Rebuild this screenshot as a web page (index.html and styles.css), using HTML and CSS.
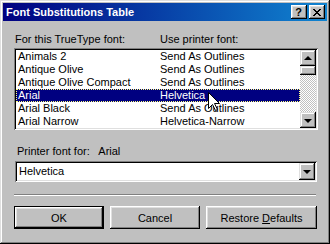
FILE: index.html
```html
<!DOCTYPE html>
<html lang="en">
<head>
    <meta charset="UTF-8">
    <title>Font Substitutions Table</title>
    <link rel="stylesheet" href="styles.css">
</head>
<body>
    <div class="window">
        <div class="titlebar">
            <span class="title">Font Substitutions Table</span>
            <div class="title-buttons">
                <div class="tb tb-help">?</div>
                <div class="tb tb-close">
                    <svg width="8" height="7" viewBox="0 0 8 7"><path d="M0 0h2v1h1v1h2v-1h1v-1h2v1h-1v1h-1v1h-1v1h1v1h1v1h1v1h-2v-1h-1v-1h-2v1h-1v1h-2v-1h1v-1h1v-1h1v-1h-1v-1h-1v-1h-1z" fill="#000"/></svg>
                </div>
            </div>
        </div>

        <div class="content">
            <div class="list-head">
                <span class="col1">For this TrueType font:</span>
                <span class="col2">Use printer font:</span>
            </div>

            <div class="listbox">
                <div class="rows">
                    <div class="row"><span class="col1">Animals 2</span><span class="col2">Send As Outlines</span></div>
                    <div class="row"><span class="col1">Antique Olive</span><span class="col2">Send As Outlines</span></div>
                    <div class="row"><span class="col1">Antique Olive Compact</span><span class="col2">Send As Outlines</span></div>
                    <div class="row selected"><span class="col1">Arial</span><span class="col2">Helvetica</span></div>
                    <div class="row"><span class="col1">Arial Black</span><span class="col2">Send As Outlines</span></div>
                    <div class="row"><span class="col1">Arial Narrow</span><span class="col2">Helvetica-Narrow</span></div>
                </div>
                <div class="scrollbar">
                    <div class="sb-btn"><span class="arrow-up"></span></div>
                    <div class="sb-thumb"></div>
                    <div class="sb-track"></div>
                    <div class="sb-btn"><span class="arrow-down"></span></div>
                </div>
            </div>

            <div class="printer-label">Printer font for:&nbsp;&nbsp; Arial</div>

            <div class="combo">
                <span class="combo-text">Helvetica</span>
                <div class="sb-btn combo-btn"><span class="arrow-down"></span></div>
            </div>

            <div class="separator"></div>

            <div class="buttons">
                <div class="btn btn-default"><span>OK</span></div>
                <div class="btn"><span>Cancel</span></div>
                <div class="btn btn-wide"><span>Restore <u>D</u>efaults</span></div>
            </div>
        </div>

        <!-- mouse pointer over the list -->
        <svg class="cursor" width="12" height="20" viewBox="0 0 12 20">
            <path d="M0.5 0.5 V16.5 L4.5 12.5 L7.5 18.5 L9.5 17.5 L6.5 11.5 H11.5 Z" fill="#fff" stroke="#000" stroke-width="1"/>
        </svg>
    </div>
</body>
</html>
```

FILE: styles.css
```css
body {
    margin: 0;
    font-family: "Liberation Sans", Arial, sans-serif;
    font-size: 11px;
    color: #000;
    background: #c0c0c0;
}
.window {
    position: relative;
    width: 330px;
    height: 244px;
    box-sizing: border-box;
    padding: 3px;
    background: #c0c0c0;
    box-shadow: inset -1px -1px #000, inset 1px 1px #dfdfdf, inset -2px -2px #808080, inset 2px 2px #fff;
    overflow: hidden;
}
.titlebar {
    height: 18px;
    display: flex;
    align-items: center;
    justify-content: space-between;
    padding: 0 2px 0 3px;
    background: linear-gradient(to right, #000080, #1084d0);
}
.title {
    color: #fff;
    font-weight: bold;
    font-size: 11px;
    white-space: nowrap;
}
.title-buttons {
    display: flex;
    gap: 2px;
}
.tb {
    width: 16px;
    height: 14px;
    box-sizing: border-box;
    display: flex;
    align-items: center;
    justify-content: center;
    background: #c0c0c0;
    box-shadow: inset -1px -1px #000, inset 1px 1px #fff, inset -2px -2px #808080, inset 2px 2px #dfdfdf;
}
.tb-help {
    font-weight: bold;
    font-size: 11px;
    line-height: 14px;
    padding-right: 1px;
}
.tb-close svg {
    display: block;
}
.content {
    padding: 12px 9px 0 11px;
}
.list-head {
    display: flex;
    line-height: 13px;
    padding-left: 1px;
}
.list-head .col1 {
    width: 145px;
}
.listbox {
    margin-top: 2px;
    height: 82px;
    box-sizing: border-box;
    display: flex;
    padding: 2px;
    background: #fff;
    box-shadow: inset 1px 1px #808080, inset -1px -1px #fff, inset 2px 2px #000, inset -2px -2px #dfdfdf;
}
.rows {
    flex: 1;
}
.row {
    display: flex;
    height: 13px;
    line-height: 13px;
    padding-left: 2px;
    white-space: nowrap;
}
.row .col1 {
    width: 142px;
}
.row.selected {
    background: #000080;
    color: #fff;
    outline: 1px dotted #ffff80;
    outline-offset: -1px;
}
.scrollbar {
    width: 16px;
    display: flex;
    flex-direction: column;
}
.sb-btn {
    width: 16px;
    height: 16px;
    box-sizing: border-box;
    flex: none;
    display: flex;
    align-items: center;
    justify-content: center;
    background: #c0c0c0;
    box-shadow: inset -1px -1px #000, inset 1px 1px #dfdfdf, inset -2px -2px #808080, inset 2px 2px #fff;
}
.sb-thumb {
    height: 9px;
    flex: none;
    background: #c0c0c0;
    box-shadow: inset -1px -1px #000, inset 1px 1px #dfdfdf, inset -2px -2px #808080, inset 2px 2px #fff;
}
.sb-track {
    flex: 1;
    background-color: #fff;
    background-image: conic-gradient(#c0c0c0 25%, #fff 0 50%, #c0c0c0 0 75%, #fff 0);
    background-size: 2px 2px;
}
.arrow-up, .arrow-down {
    width: 0;
    height: 0;
    border-left: 4px solid transparent;
    border-right: 4px solid transparent;
}
.arrow-up {
    border-bottom: 4px solid #000;
    margin-top: -1px;
}
.arrow-down {
    border-top: 4px solid #000;
    margin-top: 1px;
}
.printer-label {
    margin-top: 15px;
    line-height: 13px;
    padding-left: 3px;
}
.combo {
    margin: 3px 1px 0 1px;
    height: 21px;
    box-sizing: border-box;
    display: flex;
    align-items: stretch;
    padding: 2px;
    background: #fff;
    box-shadow: inset 1px 1px #808080, inset -1px -1px #fff, inset 2px 2px #000, inset -2px -2px #dfdfdf;
}
.combo-text {
    flex: 1;
    line-height: 17px;
    padding-left: 2px;
}
.combo-btn {
    height: 17px;
}
.separator {
    margin: 12px 2px 0 0;
    border-top: 1px solid #808080;
    border-bottom: 1px solid #fff;
    height: 0;
}
.buttons {
    display: flex;
    gap: 6px;
    margin-top: 10px;
    padding-right: 1px;
}
.btn {
    width: 90px;
    height: 23px;
    box-sizing: border-box;
    display: flex;
    align-items: center;
    justify-content: center;
    background: #c0c0c0;
    box-shadow: inset -1px -1px #000, inset 1px 1px #fff, inset -2px -2px #808080, inset 2px 2px #dfdfdf;
}
.btn-default {
    border: 1px solid #000;
}
.btn-wide {
    width: 111px;
}
.cursor {
    position: absolute;
    left: 208px;
    top: 92px;
}
```
